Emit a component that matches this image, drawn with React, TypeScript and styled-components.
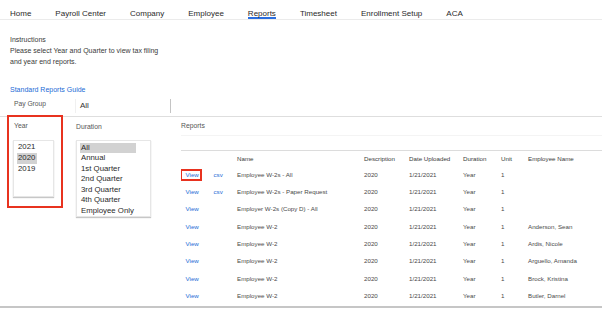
import React from "react";
import styled, { createGlobalStyle } from "styled-components";

const GlobalStyle = createGlobalStyle`
  html, body {
    margin: 0;
    padding: 0;
    background: #fff;
    font-family: "Liberation Sans", Arial, sans-serif;
    color: #333;
  }
  * { box-sizing: border-box; }
`;

const Page = styled.div`
  width: 602px;
  height: 309px;
  overflow: hidden;
`;

const Nav = styled.nav`
  display: flex;
  gap: 24px;
  height: 20px;
  padding-left: 10px;
  border-bottom: 1px solid #ebebeb;
`;

const NavItem = styled.a<{ $active?: boolean }>`
  height: 19px;
  padding-top: 10px;
  line-height: 8px;
  font-size: 8px;
  color: #2a2a2a;
  text-decoration: none;
  white-space: nowrap;
  box-shadow: ${(p) => (p.$active ? "inset 0 -2px 0 #2a6ee0" : "none")};
`;

const Intro = styled.div`
  margin-top: 13.5px;
  padding-left: 10px;
  font-size: 7px;
  line-height: 11px;
  color: #3a3a3a;
`;

const GuideLink = styled.a`
  display: block;
  margin-top: 17px;
  padding-left: 10px;
  font-size: 7px;
  line-height: 11px;
  color: #1c6bd6;
  text-decoration: none;
`;

const PayGroupRow = styled.div`
  display: flex;
  align-items: flex-start;
  height: 21px;
  margin-top: 1.5px;
  padding-top: 2.7px;
  border-bottom: 1px solid #dedede;
`;

const FieldLabel = styled.div`
  width: 75px;
  padding-left: 14px;
  font-size: 6.7px;
  line-height: 10px;
  color: #555;
`;

const SelectBox = styled.div`
  width: 96px;
  height: 14px;
  padding-left: 4px;
  border-left: 1px solid #f0f0f0;
  border-right: 1px solid #c4c4c4;
  font-size: 8px;
  line-height: 14px;
  color: #333;
`;

const Panels = styled.div`
  display: flex;
  height: 191px;
  border-bottom: 2px solid #c6c6c6;
`;

const YearPanel = styled.div`
  width: 56px;
  height: 93px;
  margin: -2px 0 0 7px;
  padding: 4.3px 0 0 4px;
  border: 2px solid #e8321f;
`;

const DurationPanel = styled.div`
  width: 105px;
  margin-left: 13px;
  padding-top: 5px;
`;

const ReportsPanel = styled.div`
  flex: 1;
  padding-top: 4px;
`;

const PanelLabel = styled.div<{ $indent?: number }>`
  padding-left: ${(p) => p.$indent ?? 0}px;
  font-size: 6.8px;
  line-height: 10px;
  color: #555;
`;

const ListBox = styled.div<{ $w: number; $h: number; $top: number }>`
  width: ${(p) => p.$w}px;
  height: ${(p) => p.$h}px;
  margin-top: ${(p) => p.$top}px;
  padding: 1.5px 3px;
  border: 1px solid #e6e6e6;
  box-shadow: 0 1px 1px rgba(0, 0, 0, 0.22);
  background: #fff;
`;

const OptionList = styled.div`
  width: fit-content;
`;

const Option = styled.div<{ $selected?: boolean }>`
  padding: 0 2px 0 1px;
  font-size: 7.8px;
  line-height: 10.6px;
  color: #2a2a2a;
  white-space: nowrap;
  background: ${(p) => (p.$selected ? "#d2d2d2" : "transparent")};
`;

const ReportsHead = styled.div`
  height: 15px;
  border-bottom: 1px solid #f4f4f4;
`;

const ReportsTable = styled.table`
  width: 100%;
  margin-top: 14px;
  border-collapse: collapse;
  table-layout: fixed;
  border-top: 1px solid #dcdcdc;
`;

const Th = styled.th`
  height: 15px;
  padding: 0 0 0 4px;
  text-align: left;
  font-weight: normal;
  font-size: 6.2px;
  color: #3a3a3a;
  white-space: nowrap;
  overflow: hidden;
`;

const Td = styled.td`
  height: 17.35px;
  padding: 0 0 0 4px;
  font-size: 6.2px;
  color: #4a4a4a;
  white-space: nowrap;
  overflow: hidden;
`;

const TableLink = styled.a<{ $flagged?: boolean }>`
  position: relative;
  display: inline-block;
  padding-left: 0.5px;
  line-height: 7px;
  color: #1c6bd6;
  text-decoration: none;

  &::after {
    content: "";
    display: ${(p) => (p.$flagged ? "block" : "none")};
    position: absolute;
    top: -2px;
    bottom: -3px;
    left: -5px;
    right: -3px;
    border: 2px solid #e8321f;
  }
`;

const navItems = [
  "Home",
  "Payroll Center",
  "Company",
  "Employee",
  "Reports",
  "Timesheet",
  "Enrollment Setup",
  "ACA",
];

const years = ["2021", "2020", "2019"];
const durations = [
  "All",
  "Annual",
  "1st Quarter",
  "2nd Quarter",
  "3rd Quarter",
  "4th Quarter",
  "Employee Only",
];

interface ReportRow {
  name: string;
  csv?: boolean;
  employee?: string;
}

const rows: ReportRow[] = [
  { name: "Employee W-2s - All", csv: true },
  { name: "Employee W-2s - Paper Request", csv: true },
  { name: "Employer W-2s (Copy D) - All" },
  { name: "Employee W-2", employee: "Anderson, Sean" },
  { name: "Employee W-2", employee: "Ardis, Nicole" },
  { name: "Employee W-2", employee: "Arguello, Amanda" },
  { name: "Employee W-2", employee: "Brock, Kristina" },
  { name: "Employee W-2", employee: "Butler, Darnel" },
];

const colWidths = [28, 24, 127, 45, 54, 38, 27];

const App: React.FC = () => {
  return (
    <Page>
      <GlobalStyle />
      <Nav>
        {navItems.map((item) => (
          <NavItem key={item} $active={item === "Reports"}>
            {item}
          </NavItem>
        ))}
      </Nav>

      <Intro>
        <div>Instructions</div>
        <div>Please select Year and Quarter to view tax filing</div>
        <div>and year end reports.</div>
      </Intro>
      <GuideLink href="#">Standard Reports Guide</GuideLink>

      <PayGroupRow>
        <FieldLabel>Pay Group</FieldLabel>
        <SelectBox>All</SelectBox>
      </PayGroupRow>

      <Panels>
        <YearPanel>
          <PanelLabel $indent={1}>Year</PanelLabel>
          <ListBox $w={41} $h={57} $top={8.7}>
            <OptionList>
              {years.map((y) => (
                <Option key={y} $selected={y === "2020"}>
                  {y}
                </Option>
              ))}
            </OptionList>
          </ListBox>
        </YearPanel>

        <DurationPanel>
          <PanelLabel>Duration</PanelLabel>
          <ListBox $w={75} $h={77} $top={8}>
            <OptionList>
              {durations.map((d) => (
                <Option key={d} $selected={d === "All"}>
                  {d}
                </Option>
              ))}
            </OptionList>
          </ListBox>
        </DurationPanel>

        <ReportsPanel>
          <ReportsHead>
            <PanelLabel>Reports</PanelLabel>
          </ReportsHead>
          <ReportsTable>
            <colgroup>
              {colWidths.map((w, i) => (
                <col key={i} style={{ width: w }} />
              ))}
              <col />
            </colgroup>
            <thead>
              <tr>
                <Th />
                <Th />
                <Th>Name</Th>
                <Th>Description</Th>
                <Th>Date Uploaded</Th>
                <Th>Duration</Th>
                <Th>Unit</Th>
                <Th>Employee Name</Th>
              </tr>
            </thead>
            <tbody>
              {rows.map((r, i) => (
                <tr key={i}>
                  <Td>
                    <TableLink href="#" $flagged={i === 0}>
                      View
                    </TableLink>
                  </Td>
                  <Td>{r.csv && <TableLink href="#">csv</TableLink>}</Td>
                  <Td>{r.name}</Td>
                  <Td>2020</Td>
                  <Td>1/21/2021</Td>
                  <Td>Year</Td>
                  <Td>1</Td>
                  <Td>{r.employee ?? ""}</Td>
                </tr>
              ))}
            </tbody>
          </ReportsTable>
        </ReportsPanel>
      </Panels>
    </Page>
  );
};

export default App;
